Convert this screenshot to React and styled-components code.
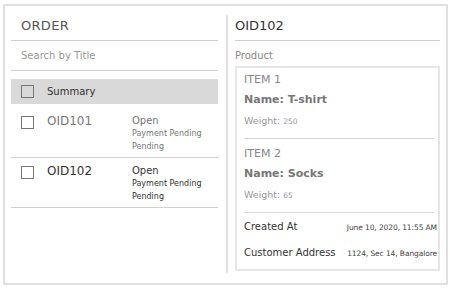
import React from "react";
import styled, { createGlobalStyle } from "styled-components";

const GlobalStyle = createGlobalStyle`
  body {
    margin: 0;
    background: #fff;
    font-family: "DejaVu Sans", "Liberation Sans", sans-serif;
  }
`;

const orders = [
  { id: "OID101", status: "Open", payment: "Payment Pending", state: "Pending", active: false },
  { id: "OID102", status: "Open", payment: "Payment Pending", state: "Pending", active: true },
];

const items = [
  { label: "ITEM 1", name: "T-shirt", weight: "250" },
  { label: "ITEM 2", name: "Socks", weight: "65" },
];

const App = () => {
  return (
    <>
      <GlobalStyle />
      <Frame>
        <ListPanel>
          <Title>ORDER</Title>
          <Search>Search by Title</Search>
          <SummaryRow>
            <Check />
            <SummaryText>Summary</SummaryText>
          </SummaryRow>
          <Rows>
            {orders.map((o) => (
              <OrderRow key={o.id}>
                <Check />
                <OrderId active={o.active}>{o.id}</OrderId>
                <Status active={o.active}>
                  <StatusMain>{o.status}</StatusMain>
                  <StatusSub>{o.payment}</StatusSub>
                  <StatusSub>{o.state}</StatusSub>
                </Status>
              </OrderRow>
            ))}
          </Rows>
        </ListPanel>

        <DetailPanel>
          <DetailTitle>OID102</DetailTitle>
          <Label>Product</Label>
          <Card>
            {items.map((it) => (
              <Item key={it.label}>
                <ItemLabel>{it.label}</ItemLabel>
                <ItemName>Name: {it.name}</ItemName>
                <Weight>
                  Weight: <small>{it.weight}</small>
                </Weight>
              </Item>
            ))}
            <InfoRow>
              <InfoKey>Created At</InfoKey>
              <InfoValue>June 10, 2020, 11:55 AM</InfoValue>
            </InfoRow>
            <InfoRow>
              <InfoKey>Customer Address</InfoKey>
              <InfoValue>1124, Sec 14, Bangalore</InfoValue>
            </InfoRow>
          </Card>
        </DetailPanel>
      </Frame>
    </>
  );
};

// ################### STYLED COMPONENTS ######################

const Frame = styled.div`
  margin: 4px 0 0 3px;
  width: 445px;
  height: 281px;
  box-sizing: border-box;
  border: 2px solid #e0e0e0;
  display: grid;
  grid-template-columns: 207px 1fr;
  column-gap: 8px;
  padding: 9px 6px 7px 6px;
`;

const ListPanel = styled.div`
  display: flex;
  flex-direction: column;
`;

const Title = styled.div`
  height: 25px;
  border-bottom: 1px solid #d0d0d0;
  padding-left: 10px;
  font-size: 13px;
  line-height: 22px;
  color: #555;
  letter-spacing: 0.3px;
`;

const Search = styled.div`
  height: 29px;
  border-bottom: 1px solid #d0d0d0;
  padding-left: 10px;
  font-size: 10px;
  line-height: 29px;
  color: #999;
`;

const SummaryRow = styled.div`
  margin-top: 8px;
  height: 25px;
  background: #d9d9d9;
  display: flex;
  align-items: center;
  padding-left: 10px;
`;

const Check = styled.span`
  width: 11px;
  height: 11px;
  border: 1px solid #777;
  flex-shrink: 0;
  background: transparent;
`;

const SummaryText = styled.span`
  margin-left: 13px;
  font-size: 10px;
  color: #333;
`;

const Rows = styled.div`
  padding-top: 4px;
`;

const OrderRow = styled.div`
  display: flex;
  align-items: flex-start;
  padding: 6px 0 4px 10px;
  border-bottom: 1px solid #d0d0d0;

  ${Check} {
    margin-top: 2px;
  }
`;

const OrderId = styled.span`
  width: 85px;
  margin-left: 13px;
  font-size: 12px;
  line-height: 15px;
  color: ${(p) => (p.active ? "#333" : "#777")};
`;

const Status = styled.div`
  display: flex;
  flex-direction: column;
  color: ${(p) => (p.active ? "#333" : "#777")};
`;

const StatusMain = styled.span`
  font-size: 10px;
  line-height: 14px;
`;

const StatusSub = styled.span`
  font-size: 8px;
  line-height: 12.5px;
`;

const DetailPanel = styled.div`
  border-left: 2px solid #e0e0e0;
  padding-left: 7px;
  margin-bottom: 3px;
  display: flex;
  flex-direction: column;
`;

const DetailTitle = styled.div`
  height: 25px;
  border-bottom: 1px solid #d0d0d0;
  font-size: 13px;
  line-height: 22px;
  color: #333;
`;

const Label = styled.div`
  height: 25px;
  font-size: 10px;
  line-height: 30px;
  color: #888;
`;

const Card = styled.div`
  flex: 1;
  margin-bottom: 2px;
  border: 2px solid #e6e6e6;
  padding: 0 1px 0 7px;
  display: flex;
  flex-direction: column;
`;

const Item = styled.div`
  border-bottom: 1px solid #d6d6d6;
  padding: 6px 0 6px;
  margin-right: 3px;

  &:first-child {
    margin-top: -3px;
  }
`;

const ItemLabel = styled.div`
  font-size: 11px;
  line-height: 18px;
  color: #888;
`;

const ItemName = styled.div`
  font-size: 11px;
  font-weight: bold;
  line-height: 21px;
  color: #777;
`;

const Weight = styled.div`
  font-size: 9.5px;
  line-height: 21px;
  color: #999;

  small {
    font-size: 7.5px;
  }
`;

const InfoRow = styled.div`
  display: flex;
  justify-content: space-between;
  align-items: baseline;
  height: 26px;
  line-height: 28px;
`;

const InfoKey = styled.span`
  font-size: 10px;
  color: #333;
`;

const InfoValue = styled.span`
  font-size: 7.5px;
  color: #444;
  letter-spacing: -0.1px;
`;

export default App;
